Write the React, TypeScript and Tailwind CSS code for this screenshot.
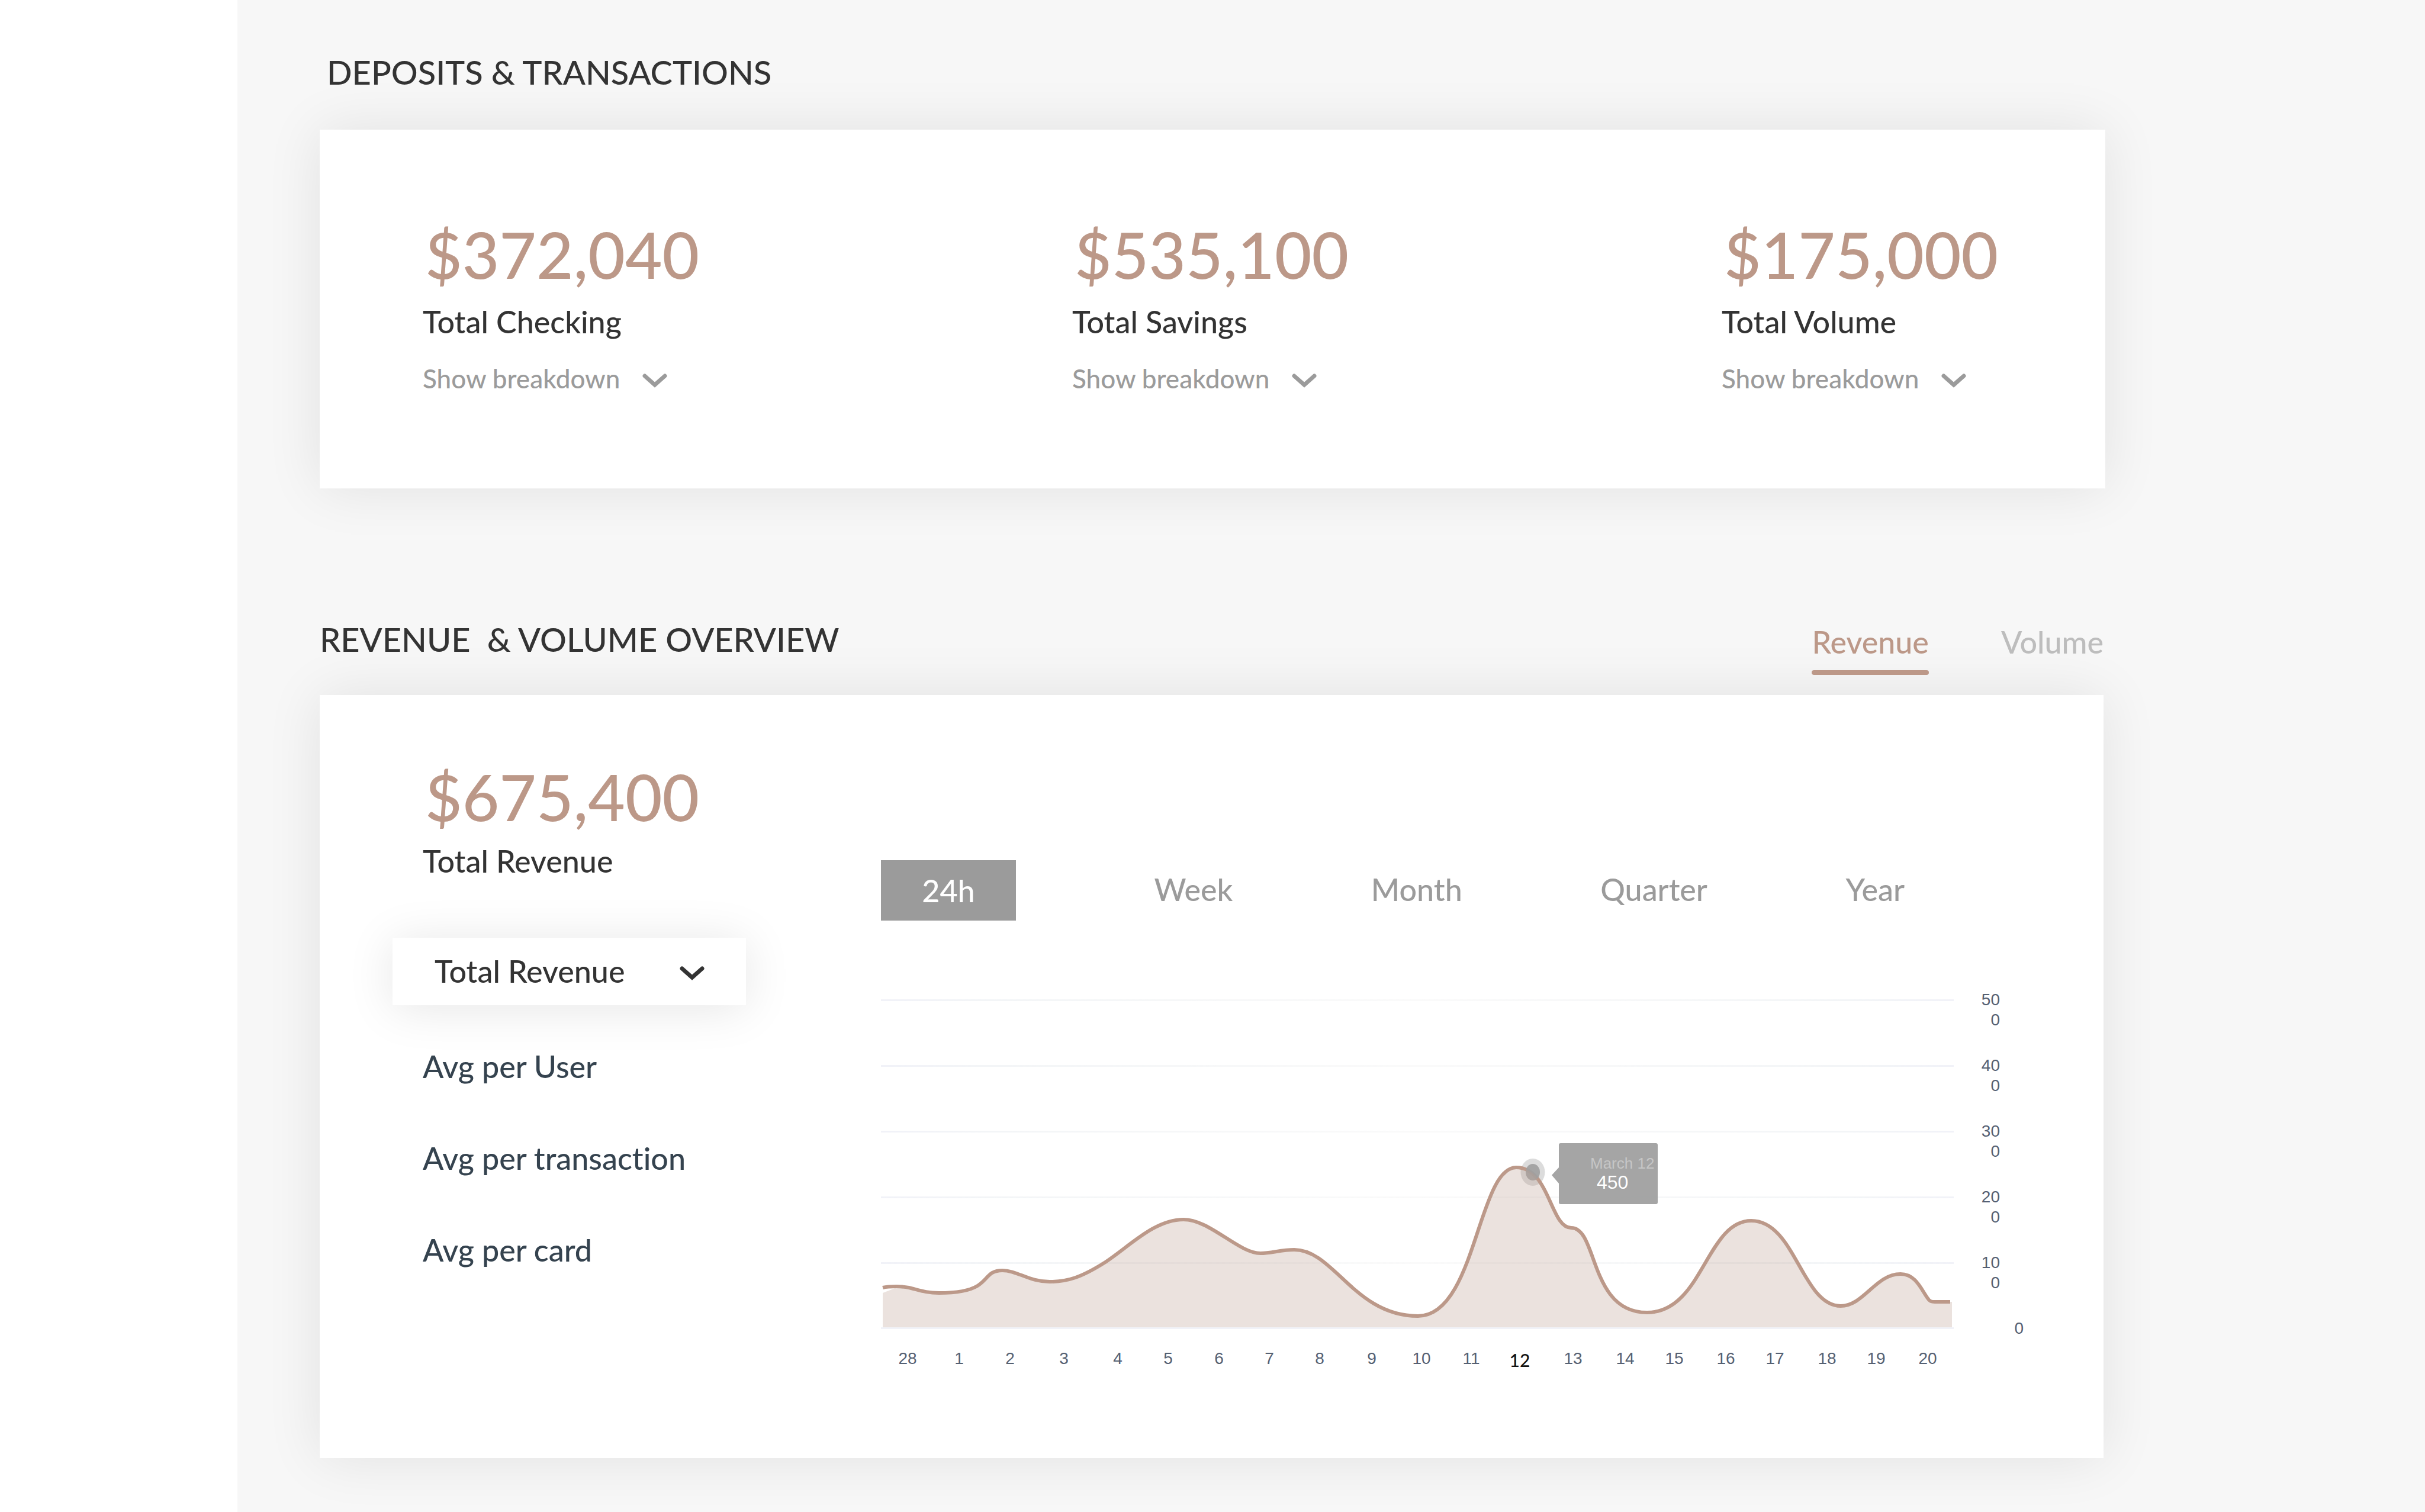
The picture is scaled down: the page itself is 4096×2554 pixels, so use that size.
import React from "react";

const stats = [
  { amount: "$372,040", label: "Total Checking" },
  { amount: "$535,100", label: "Total Savings" },
  { amount: "$175,000", label: "Total Volume" },
];

const metrics = ["Avg per User", "Avg per transaction", "Avg per card"];

const ranges = ["Week", "Month", "Quarter", "Year"];

const days: [string, number][] = [
  ["28", 45], ["1", 132], ["2", 218], ["3", 309], ["4", 400], ["5", 485],
  ["6", 571], ["7", 656], ["8", 741], ["9", 829], ["10", 913], ["11", 997],
  ["13", 1169], ["14", 1257], ["15", 1340], ["16", 1427], ["17", 1510],
  ["18", 1598], ["19", 1681], ["20", 1768],
];

const levels = ["50", "40", "30", "20", "10"];

// Revenue curve, from the second point of the series onwards.
const curve = [
  "C36 513 42 514 47 515",
  "C64 519 76 524 98 524",
  "C125 524 150 520 163 512",
  "C181 501 181 486 205 486",
  "C230 486 250 505 285 505",
  "C315 505 338 498 379 472",
  "C420 445 462 400 511 400",
  "C556 400 604 457 641 457",
  "C660 457 675 451 698 451",
  "C765 451 800 563 907 563",
  "C1005 563 1008 312 1073 312",
  "C1130 312 1130 414 1166 414",
  "C1211 414 1196 557 1294 557",
  "C1388 557 1394 402 1470 402",
  "C1544 402 1556 546 1621 546",
  "C1660 546 1680 492 1722 492",
  "C1748 492 1757 518 1768 533",
  "C1771 538 1774 539 1780 539",
  "L1806 539",
].join("");

const line = `M3 515C11 513 18 513 26 513${curve}`;
const area = `M3 582V524L26 515V513${curve}H1809V582Z`;

function Chevron() {
  return (
    <svg viewBox="0 0 42 26" className="mt-[10px] h-[26px] w-[42px]" fill="none" aria-hidden="true">
      <path d="M4 4 21 19 38 4" stroke="currentColor" strokeWidth="7" strokeLinecap="round" />
    </svg>
  );
}

function Chart() {
  return (
    <svg
      viewBox="0 0 1940 670"
      className="block w-full"
      role="img"
      aria-label="Revenue by day"
      fontFamily="'Liberation Sans', Arial, sans-serif"
    >
      <defs>
        <linearGradient id="rule" x1="0" x2="1812" y1="0" y2="0" gradientUnits="userSpaceOnUse">
          <stop offset="0" stopColor="#f1f2f8" />
          <stop offset="0.1" stopColor="#f3f5f7" />
          <stop offset="0.5" stopColor="#fafafa" />
          <stop offset="0.9" stopColor="#f3f5f7" />
          <stop offset="1" stopColor="#f1f2f8" />
        </linearGradient>
      </defs>
      {levels.map((level, i) => (
        <g key={level} fontSize="28" fill="#556072" textAnchor="end">
          <rect x="0" y={28 + i * 111} width="1812" height="3" fill="url(#rule)" />
          <text x="1890" y={38 + i * 111}>{level}</text>
          <text x="1890" y={72 + i * 111}>0</text>
        </g>
      ))}
      <rect x="0" y="582" width="1812" height="3" fill="#f1f2f8" />
      <text x="1930" y="593" fontSize="28" fill="#556072" textAnchor="end">0</text>

      <ellipse cx="1101" cy="320" rx="20.5" ry="23" fill="#9b9b9b" fillOpacity="0.35" />
      <path d={line} fill="none" stroke="#bc9888" strokeWidth="6" />
      <ellipse cx="1101" cy="320" rx="12" ry="14" fill="#a0a0a0" fillOpacity="0.92" />
      <path d={area} fill="#bc9e91" fillOpacity="0.3" />
      <path
        d="M1148 271H1309Q1312 271 1312 274V371Q1312 374 1309 374H1148Q1145 374 1145 371V339L1133 325 1145 312V274Q1145 271 1148 271Z"
        fill="#9b9b9b"
        fillOpacity="0.9"
      />
      <text x="1198" y="314" fontSize="26" fill="#c6c6c6">March 12</text>
      <text x="1209" y="348" fontSize="32" fill="#ffffff">450</text>

      <g fontSize="28" fill="#556072" textAnchor="middle">
        {days.map(([day, x]) => (
          <text key={day} x={x} y="644">{day}</text>
        ))}
      </g>
      <text
        x="1079"
        y="649"
        fontSize="30"
        fontWeight="500"
        fontFamily="Lato, sans-serif"
        fill="#111111"
        textAnchor="middle"
      >
        12
      </text>
    </svg>
  );
}

export default function App() {
  return (
    <div className="flex min-h-screen bg-[#f7f7f7] font-['Lato',sans-serif] font-medium text-[#333333] [font-variant-ligatures:none]">
      <aside className="w-[401px] shrink-0 bg-white" />
      <main className="min-w-0 flex-1 pt-[90px] pr-[540px] pb-[90px] pl-[139px]">
        <section>
          <h2 className="pl-[12px] text-[56px] leading-[64px]">DEPOSITS &amp; TRANSACTIONS</h2>
          <div className="mt-[65px] flex h-[606px] justify-between bg-white pt-[144px] pr-[192px] pl-[174px] shadow-[0_0_90px_rgba(0,0,0,0.09)]">
            {stats.map((s) => (
              <div key={s.label} className="w-[456px]">
                <p className="pl-[4px] text-[108px] leading-[132px] text-[#bc9888]">{s.amount}</p>
                <p className="mt-[16px] text-[52px] leading-[64px]">{s.label}</p>
                <button className="mt-[34px] flex items-center gap-[38px] text-[44px] leading-[60px] text-[#9b9b9b]">
                  Show breakdown
                  <Chevron />
                </button>
              </div>
            ))}
          </div>
        </section>

        <section className="mt-[223px] pr-[3px]">
          <div className="flex items-start justify-between">
            <h2 className="text-[56px] leading-[64px] whitespace-pre">{"REVENUE  & VOLUME OVERVIEW"}</h2>
            <nav className="flex gap-[122px] pt-[4px] text-[52px] leading-[64px]">
              <button className="text-[#bc9888]">
                Revenue
                <span className="mt-[16px] block h-[8px] rounded-[4px] bg-[#bc9888]" />
              </button>
              <button className="self-start text-[#bdbdbd]">Volume</button>
            </nav>
          </div>
          <div className="mt-[34px] flex h-[1289px] bg-white shadow-[0_0_90px_rgba(0,0,0,0.09)]">
            <div className="w-[948px] shrink-0 pt-[105px] pl-[123px]">
              <p className="pl-[55px] text-[108px] leading-[132px] text-[#bc9888]">$675,400</p>
              <p className="mt-[11px] pl-[51px] text-[52px] leading-[64px]">Total Revenue</p>
              <button className="mt-[98px] flex h-[114px] w-[597px] items-center justify-between bg-white pr-[70px] pb-[2px] pl-[71px] text-[52px] leading-[64px] shadow-[0_6px_80px_rgba(0,0,0,0.1)]">
                Total Revenue
                <Chevron />
              </button>
              <ul className="mt-[71px] flex flex-col gap-[91px] pl-[51px] text-[52px] leading-[64px] text-[#35434f]">
                {metrics.map((m) => (
                  <li key={m}>
                    <button>{m}</button>
                  </li>
                ))}
              </ul>
            </div>
            <div className="min-w-0 flex-1 pt-[279px] pr-[125px]">
              <div className="flex items-center justify-between pr-[211px] text-[52px] leading-[64px] text-[#9b9b9b]">
                <button className="h-[102px] w-[228px] bg-[#9b9b9b] text-white">24h</button>
                {ranges.map((r) => (
                  <button key={r} className="pb-[4px]">{r}</button>
                ))}
              </div>
              <div className="mt-[105px]">
                <Chart />
              </div>
            </div>
          </div>
        </section>
      </main>
    </div>
  );
}
